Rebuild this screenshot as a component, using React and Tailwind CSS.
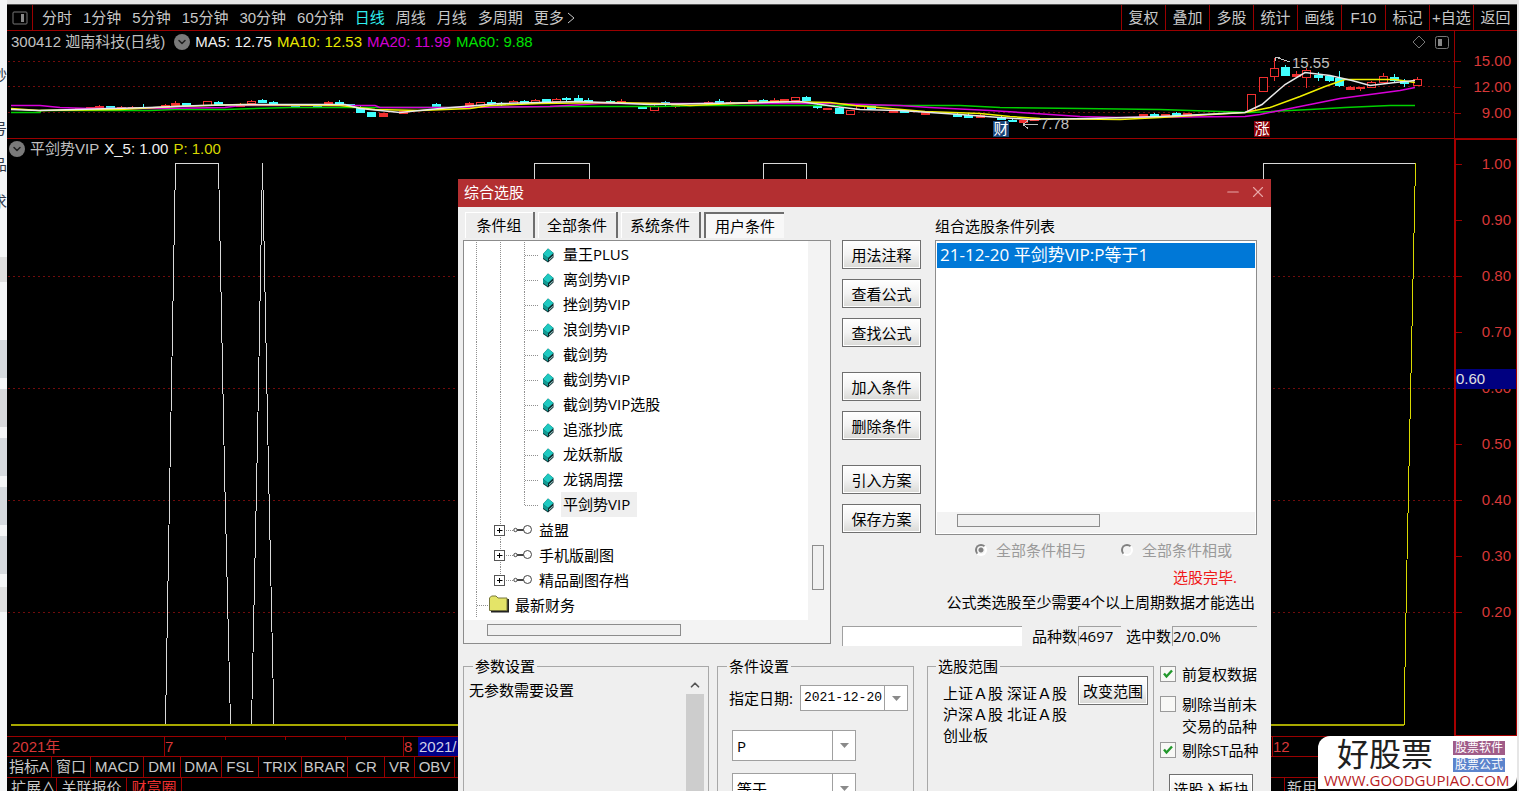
import { ChevronDown, ChevronUp, Minus, X } from "lucide-react";

const PERIODS = ["分时", "1分钟", "5分钟", "15分钟", "30分钟", "60分钟", "日线", "周线", "月线", "多周期", "更多"];
const TOOLS = ["复权", "叠加", "多股", "统计", "画线", "F10", "标记", "+自选", "返回"];

const INDICATORS = [
  ["指标A", "w-[45px]"],
  ["窗口", "w-[39px]"],
  ["MACD", "w-[53px]"],
  ["DMI", "w-[37px]"],
  ["DMA", "w-[41px]"],
  ["FSL", "w-[37px]"],
  ["TRIX", "w-[43px]"],
  ["BRAR", "w-[46px]"],
  ["CR", "w-[37px]"],
  ["VR", "w-[30px]"],
  ["OBV", "w-[40px]"],
];

// x, body top, body bottom, high, low, kind (u = hollow red, r = solid red, d = solid cyan)
const CANDLES = [
  [68, 109, 110, 109, 110, "r"], [79, 108, 109, 108, 109, "r"], [90, 107, 109, 107, 109, "r"],
  [99, 106, 108, 105, 109, "r"], [110, 106, 108, 106, 108, "d"], [121, 107, 108, 106, 109, "r"],
  [132, 107, 108, 106, 109, "r"], [143, 107, 108, 104, 109, "d"], [165, 105, 107, 104, 108, "r"],
  [175, 103, 105, 101, 107, "r"], [186, 103, 105, 103, 105, "d"], [207, 101, 105, 101, 105, "u"],
  [218, 102, 104, 101, 105, "d"], [240, 104, 106, 103, 106, "r"], [251, 101, 103, 100, 104, "u"],
  [262, 100, 102, 99, 102, "d"], [273, 102, 104, 101, 105, "d"], [295, 105, 107, 104, 107, "d"],
  [317, 104, 106, 104, 106, "d"], [328, 102, 104, 101, 105, "r"], [339, 102, 104, 100, 104, "d"],
  [350, 104, 106, 104, 106, "d"], [360, 108, 112, 106, 112, "d"], [371, 112, 116, 112, 116, "d"],
  [383, 113, 116, 113, 116, "r"], [403, 111, 113, 111, 114, "r"], [436, 104, 106, 103, 107, "d"],
  [469, 103, 106, 102, 107, "r"], [480, 102, 105, 102, 105, "u"], [491, 102, 103, 100, 103, "d"],
  [501, 103, 104, 102, 106, "d"], [513, 101, 104, 100, 104, "u"], [524, 101, 103, 100, 104, "d"],
  [535, 100, 103, 99, 104, "u"], [546, 99, 101, 99, 101, "d"], [556, 99, 101, 98, 103, "u"],
  [566, 98, 99, 97, 102, "d"], [578, 98, 100, 95, 101, "d"], [588, 100, 101, 98, 102, "d"],
  [610, 101, 103, 100, 103, "d"], [621, 101, 103, 99, 103, "r"], [642, 106, 108, 106, 109, "d"],
  [654, 106, 110, 105, 110, "u"], [665, 102, 103, 101, 107, "d"], [675, 104, 106, 104, 108, "r"],
  [708, 102, 103, 101, 104, "r"], [719, 101, 103, 99, 103, "d"], [730, 102, 103, 101, 104, "r"],
  [752, 100, 102, 100, 102, "r"], [763, 100, 102, 99, 103, "d"], [774, 100, 102, 98, 102, "r"],
  [784, 99, 101, 99, 102, "r"], [795, 97, 100, 97, 100, "u"], [806, 97, 100, 96, 101, "d"],
  [817, 105, 107, 104, 109, "d"], [827, 108, 109, 108, 109, "r"], [839, 108, 113, 107, 113, "d"],
  [850, 110, 114, 110, 114, "u"], [860, 106, 109, 106, 109, "u"], [871, 106, 108, 105, 109, "d"],
  [893, 110, 112, 110, 113, "r"], [904, 110, 112, 109, 112, "d"], [925, 112, 114, 112, 114, "r"],
  [957, 114, 116, 113, 116, "d"], [968, 115, 117, 113, 117, "d"], [980, 115, 117, 114, 118, "r"],
  [1001, 117, 119, 115, 120, "d"], [1012, 120, 121, 118, 121, "d"], [1023, 120, 122, 120, 122, "r"],
  [1034, 118, 120, 118, 120, "r"], [1143, 114, 116, 114, 116, "r"], [1154, 114, 116, 113, 117, "d"],
  [1165, 114, 115, 114, 115, "r"], [1176, 113, 116, 112, 116, "d"], [1187, 113, 116, 113, 116, "r"],
  [1251, 94, 110, 94, 110, "u"], [1263, 77, 91, 77, 91, "u"], [1274, 68, 76, 58, 81, "u"],
  [1285, 67, 75, 65, 76, "d"], [1296, 74, 76, 71, 77, "r"], [1306, 70, 77, 68, 88, "u"],
  [1318, 75, 77, 72, 81, "d"], [1329, 76, 80, 75, 82, "d"], [1339, 78, 85, 71, 87, "d"],
  [1350, 87, 89, 86, 89, "r"], [1360, 87, 88, 87, 91, "r"], [1371, 82, 87, 81, 88, "u"],
  [1383, 76, 82, 73, 83, "u"], [1394, 77, 80, 74, 82, "d"], [1404, 81, 83, 79, 87, "d"],
  [1417, 79, 85, 77, 86, "u"],
];

const MA_LINES = [
  ["#00d000", "11,112 40,112 41,110 150,110 175,109 225,109 290,107 450,107 560,106 660,106 700,105 960,105 1000,107 1080,108 1160,109 1250,112 1310,109 1345,107 1390,105 1415,105"],
  ["#d800d8", "11,105 40,105 60,107 90,108 160,108 225,107 240,105 375,105 380,107 450,107 550,106 600,103 830,103 900,105 930,107 990,110 1035,113 1080,116 1120,117 1245,116 1260,114 1290,108 1340,98 1400,90 1415,87"],
  ["#f0f000", "11,108 39,110 120,109 175,106 240,104 340,105 375,109 420,110 470,108 490,105 540,103 610,102 660,103 690,105 780,101 830,102 855,105 890,108 925,111 980,113 1010,116 1040,118 1120,119 1160,117 1245,112 1270,107 1300,96 1325,86 1345,79 1395,79 1415,82"],
  ["#e8e8e8", "11,109 39,110 150,107 200,105 250,104 345,104 360,108 400,112 440,108 500,103 580,101 650,104 760,102 800,101 835,106 860,109 900,110 960,114 1000,117 1030,119 1090,118 1160,116 1245,112 1262,104 1285,84 1305,72 1330,75 1352,80 1370,85 1395,82 1415,80"],
];

const LEAVES = ["量王PLUS", "离剑势VIP", "挫剑势VIP", "浪剑势VIP", "截剑势", "截剑势VIP", "截剑势VIP选股", "追涨抄底", "龙妖新版", "龙锅周摆", "平剑势VIP"];
const FOLDERS = ["益盟", "手机版副图", "精品副图存档"];

const ACTIONS = [
  ["用法注释", "查看公式", "查找公式"],
  ["加入条件", "删除条件"],
  ["引入方案", "保存方案"],
];

const BUTTON = "border border-[#6f6f6f] bg-linear-to-b from-white via-[#f3f3f3] to-[#d9d9d6] h-[29px] shadow-[inset_0_0_0_1px_#fff]";

function PriceChart() {
  return (
    <svg className="block h-full w-full" viewBox="7 52 1447 86" preserveAspectRatio="none" shapeRendering="crispEdges">
      {[61, 86, 112].map((y) => (
        <line key={y} x1="8" x2="1454" y1={y + 0.5} y2={y + 0.5} stroke="#700c0c" strokeDasharray="2 3" />
      ))}
      {CANDLES.map(([x, top, bottom, high, low, kind]) => {
        const color = kind === "d" ? "#40ffff" : "#f03030";
        return (
          <g key={x} stroke={color}>
            <line x1={x + 0.5} x2={x + 0.5} y1={high} y2={low} />
            <rect x={x - 3.5} y={top + 0.5} width="8" height={bottom - top} fill={kind === "u" ? "#000" : color} />
          </g>
        );
      })}
      {MA_LINES.map(([color, points]) => (
        <polyline key={color} points={points} fill="none" stroke={color} strokeWidth="1.5" shapeRendering="auto" transform="translate(0 0.5)" />
      ))}
      <path d="M1275 57 L1290 62 M1275 57 h5 M1275 57 v4" stroke="#c0c0c0" fill="none" />
      <path d="M1023 124.5 h15 M1023 124.5 l5 -4 M1023 124.5 l5 4" stroke="#c0c0c0" fill="none" />
    </svg>
  );
}

function SignalChart() {
  return (
    <svg className="block h-full w-full" viewBox="7 159 1447 577" preserveAspectRatio="none" shapeRendering="crispEdges">
      {[276, 388, 500, 612].map((y) => (
        <line key={y} x1="8" x2="1454" y1={y + 0.5} y2={y + 0.5} stroke="#700c0c" strokeDasharray="2 3" />
      ))}
      <g fill="none" stroke="#d8d8d8">
        <path d="M165.5 724 L170.5 440 L175.5 163.5 H218.5 L224.5 470 L230.5 724" />
        <path d="M251.5 724 L257.5 440 L262.5 163.5 L268.5 470 L274 724" />
        <path d="M534.5 200 V163.5 H589.5 V200 M763.5 200 V163.5 H806.5 V200 M1263.5 200 V163.5 H1415.5" />
      </g>
      <path d="M11 724.5 H1404.5 V694 L1407 560 L1415.5 163.5" fill="none" stroke="#d8d800" />
      <path d="M11 724.5 H1404" stroke="#a8a800" strokeWidth="2" />
    </svg>
  );
}

function RoundToggle() {
  return (
    <button type="button" aria-label="展开" className="flex size-4 items-center justify-center rounded-full bg-[#7a7a7a] text-[#202020]">
      <ChevronDown size={12} strokeWidth={3} />
    </button>
  );
}

function Toolbar() {
  return (
    <header className="flex h-[27px] shrink-0 border-t border-b border-t-[#555] border-b-[#9a0000] text-[#c8c8c8]">
      <button type="button" aria-label="面板" className="flex w-[26px] items-center justify-center border-r border-[#9a0000]">
        <svg width="16" height="16" viewBox="0 0 16 16" fill="none" stroke="#777">
          <rect x="1" y="2" width="14" height="12" rx="1" />
          <rect x="9" y="4" width="3" height="8" fill="#888" stroke="none" />
        </svg>
      </button>
      <nav className="flex flex-1 items-center gap-[11px] pl-[9px]">
        {PERIODS.map((name) => (
          <a key={name} href="#" className={name === "日线" ? "text-[#30f0f0]" : ""}>
            {name}
          </a>
        ))}
        <svg className="-ml-2" width="8" height="12" viewBox="0 0 8 12" fill="none" stroke="#c8c8c8">
          <path d="M1 1 L7 6 L1 11" />
        </svg>
      </nav>
      <div className="flex">
        {TOOLS.map((name) => (
          <button type="button" key={name} className="w-11 whitespace-nowrap border-l border-[#9a0000]">
            {name}
          </button>
        ))}
      </div>
    </header>
  );
}

function PricePane() {
  return (
    <section className="flex h-[108px] shrink-0 border-b border-[#9a0000]">
      <div className="relative flex min-w-0 flex-1 flex-col">
        <div className="flex h-[21px] items-center gap-[5px] pl-1 text-[#c0c0c0]">
          <span className="pr-1">300412 迦南科技(日线)</span>
          <RoundToggle />
          <span className="text-[#f0f0f0]">MA5: 12.75</span>
          <span className="text-[#e8e800]">MA10: 12.53</span>
          <span className="text-[#d000d0]">MA20: 11.99</span>
          <span className="text-[#00e000]">MA60: 9.88</span>
          <svg className="mr-1 ml-auto" width="40" height="16" viewBox="0 0 40 16" fill="none" stroke="#777">
            <path d="M9 2 L15 8 L9 14 L3 8 Z" />
            <rect x="25.5" y="2.5" width="13" height="12" rx="2" />
            <rect x="28" y="5" width="4" height="7" fill="#888" stroke="none" />
          </svg>
        </div>
        <div className="min-h-0 flex-1">
          <PriceChart />
        </div>
        <span className="absolute top-[22px] left-[1285px] text-[#c0c0c0]">15.55</span>
        <span className="absolute top-[83px] left-[1033px] text-[#c0c0c0]">7.78</span>
        <span className="absolute top-[90px] left-[986px] size-4 bg-[#174478] text-center leading-4 text-white">财</span>
        <span className="absolute top-[90px] left-[1247px] size-4 bg-[#8a0008] text-center leading-4 text-white">涨</span>
      </div>
      <div className="flex w-[63px] flex-col gap-[6px] border-l border-[#9a0000] pt-5 text-[#d83838]">
        {["15.00", "12.00", "9.00"].map((v) => (
          <div key={v} className="flex items-center justify-between pr-[6px] before:h-px before:w-[6px] before:bg-[#9a0000]">
            {v}
          </div>
        ))}
      </div>
    </section>
  );
}

function SignalPane() {
  return (
    <section className="flex min-h-0 flex-1">
      <div className="flex min-w-0 flex-1 flex-col">
        <div className="flex h-5 items-center gap-[5px] pl-[2px] text-[#c0c0c0]">
          <RoundToggle />
          <span>平剑势VIP</span>
          <span className="text-[#f0f0f0]">X_5: 1.00</span>
          <span className="text-[#d8d800]">P: 1.00</span>
        </div>
        <div className="min-h-0 flex-1">
          <SignalChart />
        </div>
      </div>
      <div className="relative w-[63px] border-t border-r border-b border-l-2 border-[#a80000] pt-[14px] text-[#d83838]">
        {["1.00", "0.90", "0.80", "0.70", "0.60", "0.50", "0.40", "0.30", "0.20"].map((v) => (
          <div key={v} className="h-14">
            <div className="flex items-center justify-between pr-[5px] before:h-px before:w-[6px] before:bg-[#9a0000]">{v}</div>
          </div>
        ))}
        <div className="absolute inset-x-0 top-[229px] h-5 bg-[#000080] text-[#e0e0e0]">0.60</div>
      </div>
    </section>
  );
}

function DateAxis() {
  return (
    <div className="flex h-[21px] shrink-0 border-t border-b border-[#9a0000] text-[#d83838]">
      <span className="w-[157px] pl-[5px]">2021年</span>
      <div className="flex w-[239px] border-l border-[#9a0000]">
        <span className="w-[60px]">7</span>
        <span className="h-[3px] w-[60px] border-l border-[#9a0000]" />
        <span className="h-[3px] w-[60px] border-l border-[#9a0000]" />
        <span className="h-[3px] border-l border-[#9a0000]" />
      </div>
      <span className="w-[15px] border-l border-[#9a0000]">8</span>
      <span className="w-[90px] bg-[#000088] pl-px text-[#d0d0e8]">2021/</span>
      <span className="ml-auto w-[245px] border-l border-[#9a0000]">12</span>
    </div>
  );
}

function BottomTabs() {
  return (
    <>
      <nav className="flex h-[21px] shrink-0 border-b border-[#9a0000] text-[#c8c8c8]">
        {INDICATORS.map(([name, width]) => (
          <a key={name} href="#" className={`${width} border-r border-[#9a0000] text-center`}>
            {name}
          </a>
        ))}
      </nav>
      <nav className="flex h-[13px] shrink-0 overflow-hidden text-[#c8c8c8]">
        <a href="#" className="w-[50px] border-r border-[#9a0000] pl-1 whitespace-nowrap">扩展∧</a>
        <a href="#" className="w-[70px] border-r border-[#9a0000] text-center">关联报价</a>
        <a href="#" className="w-[55px] border-r border-[#9a0000] text-center text-[#f03030]">财富圈</a>
        <a href="#" className="ml-auto w-[233px] border-l border-[#9a0000] pl-[2px]">新用</a>
      </nav>
    </>
  );
}

function Cube() {
  return (
    <g>
      <path d="M79 12 L84 6.5 L89.5 11 V15.5 L84 20.5 L79 17 Z" fill="#0a2a2c" />
      <path d="M79 12 L84 6.5 L89.5 11 L84 16 Z" fill="#1fcac2" />
      <path d="M79 12 L84 16 V19.5 L79 16 Z" fill="#129c94" />
      <path d="M85 17.2 L88.8 13.8 V15 L85 18.6 Z" fill="#9fc8c8" />
    </g>
  );
}

function TreeLeaf({ name, last }) {
  return (
    <li className="flex h-[25px] items-center">
      <svg width="97" height="25" viewBox="0 0 97 25">
        <path
          d={`M12.5 0 V25 M36.5 0 V25 M60.5 0 V${last ? 13 : 25} M61 13.5 H74`}
          stroke="#909090"
          strokeDasharray="1 1"
          fill="none"
          shapeRendering="crispEdges"
        />
        <Cube />
      </svg>
      <span className={`h-full pr-[7px] pl-[2px] leading-6 ${last ? "bg-[#efefef]" : ""}`}>{name}</span>
    </li>
  );
}

function TreeFolder({ name, last }) {
  return (
    <li className="flex h-[25px] items-center">
      <svg width="75" height="25" viewBox="0 0 75 25">
        <path d={`M12.5 0 V25 M36.5 0 V${last ? 13 : 25} M42 13.5 H50`} stroke="#909090" strokeDasharray="1 1" fill="none" shapeRendering="crispEdges" />
        <rect x="30.5" y="8.5" width="10" height="10" fill="#fff" stroke="#555" shapeRendering="crispEdges" />
        <path d="M33 13.5 H38.5 M35.5 11 V16" stroke="#000" />
        <g fill="#fff" stroke="#444">
          <path d="M53 13 H60" strokeWidth="2" />
          <circle cx="51.5" cy="13" r="1.7" />
          <circle cx="63.5" cy="12.5" r="4" />
        </g>
      </svg>
      <span className="leading-6">{name}</span>
    </li>
  );
}

function ConditionTree() {
  return (
    <div className="flex h-[404px] flex-col border border-[#8c8c8c] bg-[#f3f3f3]">
      <div className="flex h-[379px]">
        <ul className="flex-1 bg-white pt-px">
          {LEAVES.map((name, i) => (
            <TreeLeaf key={name} name={name} last={i === LEAVES.length - 1} />
          ))}
          {FOLDERS.map((name, i) => (
            <TreeFolder key={name} name={name} last={i === FOLDERS.length - 1} />
          ))}
          <li className="flex h-[25px] items-center">
            <svg width="51" height="25" viewBox="0 0 51 25">
              <path d="M12.5 0 V25 M13 13.5 H26" stroke="#909090" strokeDasharray="1 1" fill="none" shapeRendering="crispEdges" />
              <path d="M27 19.5 H44 V7" stroke="#222" strokeWidth="2" fill="none" />
              <path d="M25.5 18.5 V6 L27.5 4 H32 L34 6 H43 V18.5 Z" fill="#e4e468" stroke="#77773a" />
            </svg>
            <span className="leading-6">最新财务</span>
          </li>
        </ul>
        <div className="w-[22px] pt-[304px] pl-1">
          <div className="h-[45px] w-3 border border-[#8c8c8c] bg-[#f0f0f0]" />
        </div>
      </div>
      <div className="pt-1 pl-[23px]">
        <div className="h-3 w-[194px] border border-[#8c8c8c] bg-[#f0f0f0]" />
      </div>
    </div>
  );
}

function ConditionTabs() {
  const idle = "border-r-2 border-[#6e6e6e] bg-[#ededed] shadow-[inset_1px_1px_0_#fff]";
  return (
    <div role="tablist" className="mb-[2px] flex h-[26px] gap-[3px] pl-[2px]">
      <button type="button" role="tab" className={`w-[70px] ${idle}`}>条件组</button>
      <button type="button" role="tab" className={`w-20 ${idle}`}>全部条件</button>
      <button type="button" role="tab" className={`w-20 ${idle}`}>系统条件</button>
      <button type="button" role="tab" aria-selected="true" className="w-20 border-t-2 border-l-2 border-[#6e6e6e] bg-[#f8f8f8]">
        用户条件
      </button>
    </div>
  );
}

function MatchOption({ id, label, checked }) {
  return (
    <label htmlFor={id} className="flex items-center gap-[9px]">
      <input
        id={id}
        type="radio"
        name="match"
        disabled
        defaultChecked={checked}
        className="size-3 appearance-none rounded-full border-2 border-t-[#808080] border-r-white border-b-white border-l-[#808080] bg-[#f4f4f4] checked:bg-[radial-gradient(#808080_0_2px,transparent_3px)]"
      />
      {label}
    </label>
  );
}

function ResultPanel() {
  return (
    <div className="ml-[11px] flex-1">
      <div className="flex gap-[14px]">
        <div className="flex w-[79px] flex-col gap-[25px] pt-7">
          {ACTIONS.map((group) => (
            <div key={group[0]} className="flex flex-col gap-[10px]">
              {group.map((name) => (
                <button type="button" key={name} className={BUTTON}>{name}</button>
              ))}
            </div>
          ))}
        </div>
        <div className="flex-1">
          <h2 className="h-7 leading-7">组合选股条件列表</h2>
          <div className="flex h-[295px] flex-col border border-[#8c8c8c] bg-white p-px">
            <ul className="flex-1 pt-px">
              <li className="h-[25px] bg-[#0078d7] px-[3px] text-[17px] leading-6 whitespace-nowrap text-white">21-12-20 平剑势VIP:P等于1</li>
            </ul>
            <div className="h-[21px] bg-[#f3f3f3] pt-[2px] pl-5">
              <div className="h-[13px] w-[143px] border border-[#8c8c8c] bg-[#f0f0f0]" />
            </div>
          </div>
        </div>
      </div>
      <div className="flex h-[30px] items-center justify-end gap-[35px] pr-[25px] text-[#9a9a9a]">
        <MatchOption id="match-all" label="全部条件相与" checked />
        <MatchOption id="match-any" label="全部条件相或" />
      </div>
      <p className="h-6 pr-5 text-right leading-6 text-[#f01818]">选股完毕.</p>
      <p className="h-[26px] pr-[2px] text-right leading-[26px]">公式类选股至少需要4个以上周期数据才能选出</p>
      <div className="mt-[11px] flex h-5 items-center">
        <div className="h-full w-[180px] border-t border-l border-[#a0a0a0] bg-white" />
        <span className="ml-[10px]">品种数</span>
        <output className="ml-px h-full w-[43px] border-t border-l border-[#a0a0a0] leading-[18px]">4697</output>
        <span className="ml-[5px]">选中数</span>
        <output className="ml-px h-full flex-1 border-t border-l border-[#a0a0a0] leading-[18px]">2/0.0%</output>
      </div>
    </div>
  );
}

function Triangle() {
  return (
    <svg width="9" height="5" viewBox="0 0 9 5">
      <path d="M0 0 H9 L4.5 5 Z" fill="#8a8a8a" />
    </svg>
  );
}

function Picker({ label, value }) {
  return (
    <div className="relative h-[31px] w-[124px] shrink-0 border border-[#a0a0a0] bg-white">
      <select aria-label={label} defaultValue={value} className="h-full w-full appearance-none pl-1">
        <option>{value}</option>
      </select>
      <span className="pointer-events-none absolute inset-y-0 right-0 flex w-[23px] items-center justify-center border-l border-[#a0a0a0]">
        <Triangle />
      </span>
    </div>
  );
}

function Check({ id, checked, children }) {
  return (
    <div className="flex gap-[6px]">
      <span className="relative mt-[3px] size-4 shrink-0">
        <input id={id} type="checkbox" defaultChecked={checked} className="peer block size-4 appearance-none border border-[#9a9a9a] bg-[#f8f8f6]" />
        <svg className="pointer-events-none absolute inset-0 hidden peer-checked:block" width="16" height="16" viewBox="0 0 16 16">
          <path d="M4 7.5 L6.500 10.5 L12 4.5" fill="none" stroke="#22982c" strokeWidth="2.4" />
        </svg>
      </span>
      <label htmlFor={id} className="leading-[22px] whitespace-nowrap">{children}</label>
    </div>
  );
}

function SettingsRow() {
  const group = "min-w-0 border border-b-0 border-[#a8a8a8]";
  const legend = "px-[2px] leading-5";
  return (
    <div className="mt-[10px] flex min-h-0 flex-1 items-stretch">
      <fieldset className={`${group} w-[246px]`}>
        <legend className={`ml-[9px] ${legend}`}>参数设置</legend>
        <div className="flex h-[120px] justify-between pr-1 pl-[5px]">
          <p className="pt-1">无参数需要设置</p>
          <div className="flex w-[18px] flex-col">
            <button type="button" aria-label="向上" className="flex h-[18px] items-center justify-center text-[#555]">
              <ChevronUp size={14} strokeWidth={3} />
            </button>
            <div className="flex-1 bg-[#cdcdcd]" />
          </div>
        </div>
      </fieldset>
      <fieldset className={`${group} ml-2 w-[197px]`}>
        <legend className={`ml-[9px] ${legend}`}>条件设置</legend>
        <div className="flex items-center justify-between pt-[9px] pr-[5px] pl-[11px]">
          <label htmlFor="date">指定日期:</label>
          <div className="flex h-[26px] w-[108px] border border-[#a0a0a0] bg-white">
            <input id="date" defaultValue="2021-12-20" className="min-w-0 flex-1 pl-[3px] font-['Liberation_Mono',monospace] text-[13px]" />
            <button type="button" aria-label="选择日期" className="flex w-[23px] items-center justify-center border-l border-[#a0a0a0]">
              <Triangle />
            </button>
          </div>
        </div>
        <div className="flex flex-col gap-3 pt-[19px] pl-[14px]">
          <Picker label="指标线" value="P" />
          <Picker label="比较" value="等于" />
        </div>
      </fieldset>
      <fieldset className={`${group} ml-[13px] w-[227px]`}>
        <legend className={`ml-[8px] ${legend}`}>选股范围</legend>
        <div className="flex items-start justify-between pr-[5px] pl-[15px]">
          <p className="pt-[7px] leading-[21px] whitespace-nowrap">
            上证Ａ股 深证Ａ股
            <br />
            沪深Ａ股 北证Ａ股
            <br />
            创业板
          </p>
          <button type="button" className={`${BUTTON} w-[70px] shrink-0 whitespace-nowrap`}>改变范围</button>
        </div>
      </fieldset>
      <div className="ml-[6px] flex flex-col items-start pt-[7px]">
        <Check id="adjusted" checked>前复权数据</Check>
        <div className="pt-2">
          <Check id="suspended">
            剔除当前未
            <br />
            交易的品种
          </Check>
        </div>
        <div className="pt-[2px]">
          <Check id="st" checked>剔除ST品种</Check>
        </div>
        <button type="button" className={`${BUTTON} mt-[13px] ml-[9px] w-[84px] shrink-0 whitespace-nowrap`}>选股入板块</button>
      </div>
    </div>
  );
}

function PickerDialog() {
  return (
    <div
      role="dialog"
      aria-label="综合选股"
      className="absolute top-[179px] bottom-0 left-[458px] flex w-[813px] flex-col overflow-hidden bg-[#efefef] font-['Open_Sans','Noto_Sans_CJK_SC',sans-serif] text-black"
    >
      <div className="flex h-7 shrink-0 items-center bg-[#b32f31] pr-1 pb-[3px] pl-[6px] text-white">
        <h1 className="flex-1">综合选股</h1>
        <button type="button" aria-label="最小化" className="mr-[7px] text-[#e8a8a8]">
          <Minus size={18} strokeWidth={1.5} />
        </button>
        <button type="button" aria-label="关闭" className="text-[#e8a8a8]">
          <X size={18} strokeWidth={1.5} />
        </button>
      </div>
      <div className="flex min-h-0 flex-1 flex-col pt-[5px] pl-[5px]">
        <div className="flex shrink-0 pr-[14px]">
          <div className="w-[368px]">
            <ConditionTabs />
            <ConditionTree />
          </div>
          <ResultPanel />
        </div>
        <SettingsRow />
      </div>
    </div>
  );
}

function SiteBadge() {
  return (
    <div className="absolute right-[2px] bottom-[2px] flex h-[53px] w-[199px] flex-col rounded-tl-xl rounded-br-xl bg-white font-['Open_Sans','Noto_Sans_CJK_SC',sans-serif]">
      <div className="flex h-9 items-center justify-between pr-3 pl-[19px]">
        <span className="text-[32px] leading-9 text-[#202020]">好股票</span>
        <div className="flex flex-col gap-[3px] pt-1 text-[12px] leading-[14px] text-white">
          <span className="bg-[#a05c88] px-[2px]">股票软件</span>
          <span className="bg-[#5c84cc] px-[2px]">股票公式</span>
        </div>
      </div>
      <a href="#" className="pl-[6px] text-[15px] leading-[17px] whitespace-nowrap text-[#b81c24]">WWW.GOODGUPIAO.COM</a>
    </div>
  );
}

// Slice of the page that shows behind the trading window
function PageEdge() {
  const glyph = "flex h-5 justify-end overflow-hidden text-[#303848]";
  return (
    <aside className="flex w-[7px] shrink-0 flex-col overflow-hidden bg-[#f4f5f6]">
      <div className="mt-[33px] h-[33px]" />
      <div className={glyph}>妙</div>
      <div className={`${glyph} mt-[33px]`}>号</div>
      <div className={`${glyph} mt-4`}>品</div>
      <div className={`${glyph} mt-[17px]`}>求</div>
      <div className="mt-[45px] h-[25px] shrink-0 bg-[#dedede]" />
      <div className="mt-[58px] flex flex-col gap-[11px]">
        <div className="h-[38px] bg-[#d6dade]" />
        <div className="h-[38px] bg-[#d8d9dc]" />
        <div className="h-[38px] bg-[#d6dade]" />
        <div className="h-[38px] bg-[#d6dade]" />
        <div className="h-[38px] bg-[#d6dade]" />
      </div>
      <div className="mt-[13px] h-[25px] bg-[#e0e0e0]" />
    </aside>
  );
}

export default function App() {
  return (
    <div className="relative flex h-screen overflow-hidden bg-[#e6e6e6] font-['Liberation_Sans','Noto_Sans_CJK_SC',sans-serif] text-[15px] leading-5">
      <PageEdge />
      <main className="mt-1 mr-[2px] flex min-w-0 flex-1 flex-col bg-black">
        <Toolbar />
        <PricePane />
        <SignalPane />
        <DateAxis />
        <BottomTabs />
      </main>
      <PickerDialog />
      <SiteBadge />
    </div>
  );
}
